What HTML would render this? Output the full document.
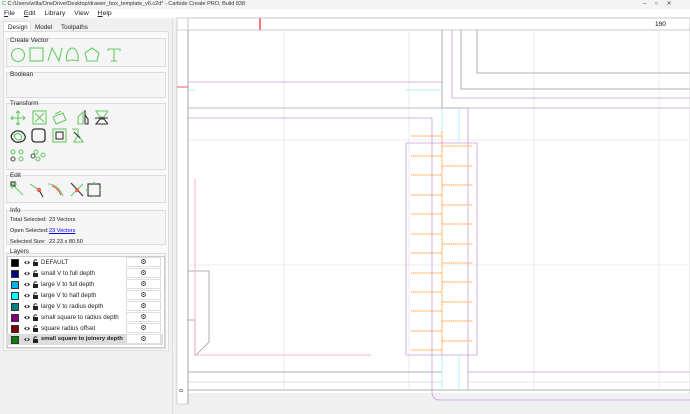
<!DOCTYPE html>
<html><head><meta charset="utf-8"><style>
*{margin:0;padding:0;box-sizing:border-box}
body{width:690px;height:414px;overflow:hidden;background:#f0f0f0;font-family:"Liberation Sans",sans-serif;font-size:6.5px;color:#222;position:relative}
.abs{position:absolute}
.sec{position:absolute;left:6px;width:160px;border:1px solid #dcdcdc;background:#f5f5f5}
.lbl{position:absolute;left:10px;font-size:6.3px}
.row{position:absolute;left:7px;width:156px;height:11px}
.sw{position:absolute;left:4px;top:1.5px;width:8px;height:8px;border:1px solid #333}
.nm{position:absolute;left:34px;top:2px;font-size:6.2px}
.gear{position:absolute;left:119px;top:0;width:35px;height:10px;background:#fff;border:1px solid #ddd;text-align:center;font-size:7px;line-height:9px}
.ei{position:absolute;left:16px;top:2px}
</style></head><body>
<div class="abs" style="left:0;top:0;width:690px;height:9px;background:#f3f3f3"></div>
<div class="abs" style="left:2px;top:1px;font-size:5.5px;color:#333"><span style="color:#3a3">C</span> C:/Users/willa/OneDrive/Desktop/drawer_box_template_v6.c2d* - Carbide Create PRO, Build 838</div>
<div class="abs" style="left:643px;top:0px;font-size:6px;color:#444">&#8211;&nbsp;&nbsp;&nbsp;&nbsp;&nbsp;&#9675;&nbsp;&nbsp;&nbsp;&nbsp;&nbsp;&#10005;</div>
<div class="abs" style="left:0;top:9px;width:690px;height:9px;background:#fff"></div>
<div class="abs" style="left:4px;top:10px;font-size:6.8px;word-spacing:7px"><u>F</u>ile <u>E</u>dit Library View <u>H</u>elp</div>
<div class="abs" style="left:3px;top:21px;width:28px;height:11px;background:#fff;border:1px solid #ddd;border-bottom:none"></div>
<div class="abs" style="left:8px;top:24px;font-size:6.3px">Design</div>
<div class="abs" style="left:35px;top:24px;font-size:6.3px">Model</div>
<div class="abs" style="left:61px;top:24px;font-size:6.3px">Toolpaths</div>
<div class="abs" style="left:3px;top:31px;width:166px;height:320px;background:#fafafa;border:1px solid #ddd"></div>
<div class="abs" style="left:172px;top:18px;width:5px;height:396px;background:#f0f0f0;border-left:1px solid #ddd"></div>

<div class="sec" style="top:38px;height:29px"></div><div class="lbl" style="top:37px">Create Vector</div>
<svg class="abs" style="left:8px;top:45px" width="115" height="20" fill="none" stroke="#6c6" stroke-width="1.1">
<circle cx="10" cy="10" r="6.5"/><rect x="22" y="3" width="13" height="13"/><path d="M40 16 L44 3 L51 16 L54 3"/><path d="M59 16 Q57 10 61 5 Q64 1 68 5 Q71 10 70 16 Q64 14 59 16Z"/><path d="M84 3 L91 8 L89 16 L79 16 L77 8Z"/><path d="M100 4 H112 V6 M100 4 V6 M106 4 V16 M103 16 H109"/>
</svg>
<div class="sec" style="top:72px;height:26px"></div><div class="lbl" style="top:71px">Boolean</div>
<div class="sec" style="top:103px;height:67px"></div><div class="lbl" style="top:100px">Transform</div>
<svg class="abs" style="left:8px;top:107px" width="100" height="60" fill="none" stroke-width="1.1">
<g stroke="#6c6"><path d="M10 4 V18 M3 11 H17 M8 6 L10 4 L12 6 M8 16 L10 18 L12 16 M5 9 L3 11 L5 13 M15 9 L17 11 L15 13"/><rect x="25" y="4" width="13" height="13"/><path d="M27 6 L36 15 M36 6 L27 15"/><path d="M45 10 L55 6 L58 13 L48 17Z M47 7 L53 4"/><path d="M70 10 V17 H75 V5Z"/><path d="M88 4 H100 L96 10 H92Z"/></g>
<g stroke="#333"><path d="M77 3 V17 M77 8 L80 12 V17 H77"/><path d="M87 11 H101 M92 12 H96 L100 17 H88Z"/></g>
<path d="M4 27 Q8 22 14 25 Q20 30 15 34 Q8 37 5 33 Q2 30 4 27Z" stroke="#333" stroke-width="1.3"/><path d="M6 28 Q10 25 13 28 Q15 32 11 33 Q7 33 6 28Z" stroke="#6c6"/>
<rect x="24" y="22" width="13" height="13" rx="3" stroke="#333" stroke-width="1.3"/>
<rect x="45" y="22" width="13" height="13" stroke="#6c6"/><rect x="48" y="25" width="7" height="7" stroke="#333"/>
<path d="M64 22 H70 V28 M70 28 L75 35 H66Z" stroke="#6c6"/><path d="M66 25 L72 31" stroke="#333"/>
<g stroke="#6c6"><circle cx="5" cy="45" r="2"/><circle cx="13" cy="45" r="2"/><circle cx="13" cy="52" r="2"/><circle cx="28" cy="45" r="2"/><circle cx="35" cy="48" r="2"/><circle cx="30" cy="52" r="2"/></g>
<g stroke="#555"><circle cx="5" cy="52" r="2"/><circle cx="25" cy="49" r="2"/></g>
</svg>
<div class="sec" style="top:175px;height:28px"></div><div class="lbl" style="top:172px">Edit</div>
<svg class="abs" style="left:8px;top:180px" width="95" height="20" fill="none" stroke-width="1.1">
<path d="M4 4 L15 15" stroke="#6c6"/><rect x="3" y="2" width="4" height="4" stroke="#333"/><path d="M4 4 V9 M4 4 H9" stroke="#6c6"/>
<path d="M22 4 L31 10" stroke="#6c6"/><path d="M31 10 L35 17" stroke="#333"/><circle cx="31" cy="10" r="1.5" stroke="#f44"/>
<path d="M40 4 Q50 4 55 16" stroke="#6c6"/><path d="M44 6 Q50 8 53 15" stroke="#f44"/>
<path d="M63 3 L75 16" stroke="#333"/><path d="M75 4 L63 16" stroke="#6c6"/><circle cx="69" cy="10" r="1.3" stroke="#f44"/>
<rect x="80" y="4" width="12" height="12" stroke="#333"/><g fill="#6c6" stroke="none"><rect x="85" y="2" width="2" height="2"/><rect x="85" y="15" width="2" height="2"/><rect x="78" y="9" width="2" height="2"/><rect x="91" y="9" width="2" height="2"/></g>
</svg>
<div class="sec" style="top:210px;height:35px"></div><div class="lbl" style="top:207px">Info</div>
<div class="abs" style="left:10px;top:215px;font-size:5.6px;line-height:11px">Total Selected:<br>Open Selected:<br>Selected Size:</div>
<div class="abs" style="left:49px;top:215px;font-size:5.6px;line-height:11px">23 Vectors<br><span style="color:#00e;text-decoration:underline">23 Vectors</span><br>22.23 x 80.50</div>
<div class="sec" style="top:253px;height:96px"></div><div class="lbl" style="top:248px">Layers</div>
<div class="abs" style="left:7px;top:256px;width:158px;height:92px;background:#fff;border:1px solid #ccc"></div>

<svg width="0" height="0" style="position:absolute"><defs><g id="el"><path d="M1 3.5 Q4 0 7 3.5 Q4 7 1 3.5Z" fill="#222"/><circle cx="4" cy="3.5" r="1.2" fill="#fff"/><rect x="10" y="3" width="5" height="4" fill="#222"/><path d="M11 3 V1.5 Q12.5 0 14 1.5" stroke="#222" fill="none" stroke-width="0.9"/></g></defs></svg>

<div class="row" style="top:257px"><div class="sw" style="background:#000"></div><svg class="ei" width="16" height="8"><use href="#el"/></svg><div class="nm">DEFAULT</div><div class="gear">⚙</div></div>
<div class="row" style="top:268px"><div class="sw" style="background:#000080"></div><svg class="ei" width="16" height="8"><use href="#el"/></svg><div class="nm">small V to full depth</div><div class="gear">⚙</div></div>
<div class="row" style="top:279px"><div class="sw" style="background:#00b0f0"></div><svg class="ei" width="16" height="8"><use href="#el"/></svg><div class="nm">large V to full depth</div><div class="gear">⚙</div></div>
<div class="row" style="top:290px"><div class="sw" style="background:#00ffff"></div><svg class="ei" width="16" height="8"><use href="#el"/></svg><div class="nm">large V to half depth</div><div class="gear">⚙</div></div>
<div class="row" style="top:301px"><div class="sw" style="background:#008080"></div><svg class="ei" width="16" height="8"><use href="#el"/></svg><div class="nm">large V to radius depth</div><div class="gear">⚙</div></div>
<div class="row" style="top:312px"><div class="sw" style="background:#800080"></div><svg class="ei" width="16" height="8"><use href="#el"/></svg><div class="nm">small square to radius depth</div><div class="gear">⚙</div></div>
<div class="row" style="top:323px"><div class="sw" style="background:#800000"></div><svg class="ei" width="16" height="8"><use href="#el"/></svg><div class="nm">square radius offset</div><div class="gear">⚙</div></div>
<div class="row" style="top:334px;background:#ddd"><div class="sw" style="background:#008000"></div><svg class="ei" width="16" height="8"><use href="#el"/></svg><div class="nm" style="font-weight:bold;font-size:5.9px">small square to joinery depth</div><div class="gear">⚙</div></div>

<svg class="abs" style="left:0;top:0" width="690" height="414" fill="none" stroke-width="0.8">
<rect x="177" y="18" width="513" height="386" fill="#fff" stroke="#ccc"/>
<rect x="177" y="18" width="11" height="386" fill="#fff" stroke="#ccc"/>
<rect x="188" y="18" width="502" height="12" fill="#fff" stroke="#bbb"/>
<rect x="177" y="393" width="513" height="21" fill="#f0f0f0" stroke="none"/>
<rect x="177" y="30" width="11" height="374" fill="#fff" stroke="#ccc"/>
<rect x="259" y="18" width="2" height="12" fill="#f77" stroke="none"/>
<path d="M177 87 H188" stroke="#e33"/>
<text x="655" y="26" font-size="6.5" fill="#000" stroke="none" font-family="Liberation Sans">180</text>
<text x="183" y="392" font-size="5" fill="#000" stroke="none" transform="rotate(-90 183 392)" font-family="Liberation Sans">0</text>
<g stroke="#e6e6e6"><path d="M284 30V390 M409 30V390 M534 30V390 M659 24V390 M188 140H690 M188 265H690"/></g>
<g stroke="#999"><path d="M188 30V404 M442 30V108 M461 30V89H690 M477 30V73H690 M442 108H468 M188 271H209V342L196 355 M188 320H195V356 M188 372H442 M188 390H690"/></g>
<path d="M188 382H442" stroke="#ccc"/>
<g stroke="#c8a0d8"><path d="M188 82H442 M452 30V98H690 M468 108H690 M188 118H432V392Q432 400 440 400H690 M468 108V390 M406 143H477V355H406Z M468 372H690"/></g>
<path d="M468 382H690" stroke="#ead8ee"/>
<path d="M188 108H442" stroke="#a8a8e0"/>
<g stroke="#9ef"><path d="M188 90H195 M406 90H442 M442 108V130 M459 108V143 M442 355V390 M459 355V390"/></g>
<g stroke="#f9c"><path d="M195 179V355H371"/></g>
<g stroke="#f93" stroke-dasharray="1.2 0.6" stroke-width="1">
<path d="M442 131V355"/>
<path d="M411 136H442 M411 156H442 M411 175H442 M411 195H442 M411 214H442 M411 234H442 M411 253H442 M411 273H442 M411 292H442 M411 311H442 M411 331H442 M411 350H442"/>
<path d="M442 146H473 M442 166H473 M442 185H473 M442 205H473 M442 224H473 M442 244H473 M442 263H473 M442 282H473 M442 302H473 M442 321H473 M442 341H473"/>
</g>
</svg>
</body></html>
